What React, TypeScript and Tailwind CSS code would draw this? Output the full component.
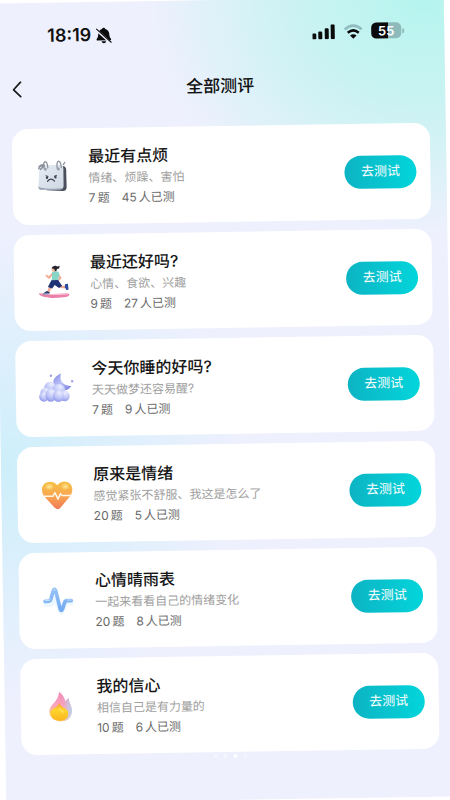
import type { ReactNode } from "react";

function CalendarIcon() {
  return (
    <svg viewBox="0 0 40 40" className="size-10" aria-hidden="true">
      <defs>
        <linearGradient id="paper" x1="0" y1="0" x2="1" y2="1">
          <stop offset="0" stopColor="#e6ebf2" />
          <stop offset="1" stopColor="#cdd7e3" />
        </linearGradient>
      </defs>
      <path d="M14 9.500h16q3.500 0 3.800 3.500l.2 17.500q0 4-4 4l-16-1z" fill="#4b4f5c" />
      <path d="M10 8.500h17.500q3.500 0 3.500 3.500v17q0 4-4 4H9q-3.500 0-3.200-3.500L7 11.500q.2-3 3-3z" fill="url(#paper)" />
      <path d="M5.800 29.500Q5.700 33 9 33h18q2 0 3-1.200-9 .8-17-.2-6-.8-7.200-2.100z" fill="#98a2b2" />
      <g fill="none" stroke="#8d939e" strokeWidth="1.300" strokeLinecap="round">
        <path d="M12 12q-1.500-6 .5-7 2.500-.5 3 6" />
        <path d="M25 12q-1-6 1-7.300 2.500-.5 3 6.300" />
        <path d="M7 9.500l5-1M8 12.500l4-3.500M6.500 11.500q1-4 5-3.500" strokeWidth="1.600" />
        <path d="M31 8l1.500-2" />
      </g>
      <circle cx="13" cy="12.500" r="1.500" fill="#9aa2ae" />
      <circle cx="26" cy="12.500" r="1.500" fill="#9aa2ae" />
      <g fill="none" stroke="#3f4553" strokeLinecap="round">
        <path d="M15 24.500q3.500-4 7 0" strokeWidth="1.200" />
        <path d="M13.500 19l2 .8M24 18.800l-2 .8" strokeWidth="1" />
      </g>
      <circle cx="14.500" cy="21" r="1.200" fill="#3f4553" />
      <circle cx="23" cy="20.600" r="1.200" fill="#3f4553" />
    </svg>
  );
}

function RunnerIcon() {
  return (
    <svg viewBox="0 0 40 40" className="size-10" aria-hidden="true">
      <path d="M5.300 30.200q4 1 13 1 9-.4 15-.2 2.200.3 1.700 1.800-1.500 1.700-6 2-6 .6-12 .4-10-.8-12-3.500-.4-1 .3-1.500z" fill="#ec7fa9" />
      <path d="M6 30.700q8 1.700 27.500.8" stroke="#f9bfd3" strokeWidth="1" fill="none" />
      <g fill="none" strokeLinecap="round" strokeLinejoin="round">
        <path d="M18 22l-2.500 4-2 4" stroke="#f2ab93" strokeWidth="2.600" />
        <path d="M24 22.500l3.500 2h3.500" stroke="#f2ab93" strokeWidth="2.400" />
        <path d="M18 11.500l-3 3.500-2.500-2" stroke="#f2ab93" strokeWidth="2" />
        <path d="M24 12l2.500 3.500-2.500 2" stroke="#f2ab93" strokeWidth="1.900" />
      </g>
      <path d="M18.200 9q3-1.200 6.500.3l.7 3.200-1.500 5.500h-6.300z" fill="#86d5c7" />
      <path d="M17.300 17.500h6.700l4 6-3.200 2-4.300-3.200-2.500 3.500-4.300-1.500z" fill="#1f3274" />
      <path d="M12.500 28.300l3 1.200-.8 2.300H8.500l.6-1.300z" fill="#2b3b75" />
      <path d="M9 31.200h6" stroke="#fff" strokeWidth=".8" />
      <path d="M30.800 21.800l3-.5.500 6-2.200.2-1.400-2.700z" fill="#2b4a9c" />
      <circle cx="20" cy="6.800" r="2.400" fill="#f5b9a2" />
      <path d="M17.600 5.500q1-2.900 4.400-2.400l1.600.8 2.200-.7-.6 2.800-2.100.4q0 2.200-2 2.200l-.8-2.300z" fill="#26262f" />
    </svg>
  );
}

function NightIcon() {
  return (
    <svg viewBox="0 0 40 40" className="size-10" aria-hidden="true">
      <defs>
        <radialGradient id="puff" cx=".6" cy=".2" r=".9">
          <stop offset="0" stopColor="#eceefe" />
          <stop offset=".55" stopColor="#bdc3f7" />
          <stop offset="1" stopColor="#8089e6" />
        </radialGradient>
        <linearGradient id="moon" x1="0" y1="0" x2="1" y2="1">
          <stop offset="0" stopColor="#8189e2" />
          <stop offset=".5" stopColor="#bcc2f8" />
          <stop offset="1" stopColor="#6f78d8" />
        </linearGradient>
      </defs>
      <path d="M25.500 5q-2 5.500 1.500 9.500 3.500 3.500 8.600 3-3.500 5.500-9.600 3.500-8-2.500-8.500-8.500 2-5.500 8-7.500z" fill="url(#moon)" />
      <circle cx="14.500" cy="19" r="6" fill="url(#puff)" />
      <circle cx="23" cy="22" r="6.500" fill="url(#puff)" />
      <circle cx="9.500" cy="24" r="5" fill="url(#puff)" />
      <circle cx="8" cy="28" r="4.800" fill="url(#puff)" />
      <circle cx="28.500" cy="27.500" r="5.300" fill="url(#puff)" />
      <ellipse cx="15" cy="26.500" rx="5.500" ry="6.500" fill="url(#puff)" />
      <ellipse cx="22.500" cy="27.500" rx="5.500" ry="5.800" fill="url(#puff)" />
      <circle cx="15.300" cy="7" r="1.200" fill="#9aa1df" />
      <circle cx="36.500" cy="12.800" r="1.200" fill="#9aa1df" />
    </svg>
  );
}

function HeartIcon() {
  return (
    <svg viewBox="0 0 40 40" className="size-10" aria-hidden="true">
      <defs>
        <linearGradient id="heart" x1="0" y1="0" x2="0" y2="1">
          <stop offset="0" stopColor="#f6bf45" />
          <stop offset=".5" stopColor="#f9a850" />
          <stop offset="1" stopColor="#f07a58" />
        </linearGradient>
        <radialGradient id="heartGlow">
          <stop offset="0" stopColor="#ffeb98" />
          <stop offset="1" stopColor="#ffeb98" stopOpacity="0" />
        </radialGradient>
      </defs>
      <path d="M20 34.500q-1.500 0-3-1.500L7.500 22.500Q4.500 19 4.500 15 5 7.500 12.500 7q4.500 0 7.500 3.500Q23 7 27.500 7q7 .5 7.500 8 0 4-3 7.500L23 33q-1.500 1.500-3 1.500z" fill="url(#heart)" />
      <ellipse cx="12" cy="12" rx="5" ry="3.500" fill="url(#heartGlow)" />
      <ellipse cx="28" cy="12" rx="4.500" ry="3.500" fill="url(#heartGlow)" />
      <path d="M7 21.500h8.500l2-3.500 3 6.500 2.500-5.500 1.500 2H34" fill="none" stroke="#fff6e8" strokeWidth="1.500" strokeLinecap="round" strokeLinejoin="round" />
    </svg>
  );
}

function PulseIcon() {
  return (
    <svg viewBox="0 0 40 40" className="size-10" aria-hidden="true">
      <defs>
        <linearGradient id="pulse" x1="0" y1="0" x2="0" y2="1">
          <stop offset="0" stopColor="#96c2f6" />
          <stop offset="1" stopColor="#72abf2" />
        </linearGradient>
      </defs>
      <g fill="none" strokeLinecap="round" strokeLinejoin="round">
        <path d="M7 23h5l4-8 6 16 4-9h6" stroke="#edf8fe" strokeWidth="6" />
        <path d="M6 20.500h3q2 0 2.700-2l2.600-8.500q1.200-2.500 2.400 0l4.300 18.500q1 2.800 2.200 0l2.300-6.500q.7-1.800 2.500-1.800h4" stroke="url(#pulse)" strokeWidth="3.700" />
        <path d="M6 19.800h3.500q1 0 1.500-1.500M15 9.500l1-.8M28 19.500h4" stroke="#c6e1ff" strokeWidth="1" />
      </g>
    </svg>
  );
}

function FlameIcon() {
  return (
    <svg viewBox="0 0 40 40" className="size-10" aria-hidden="true">
      <defs>
        <linearGradient id="flame" x1=".6" y1="0" x2=".4" y2="1">
          <stop offset="0" stopColor="#f58bb8" />
          <stop offset=".5" stopColor="#f8a5bd" />
          <stop offset="1" stopColor="#fbd27a" />
        </linearGradient>
        <linearGradient id="flameSide" x1="0" y1="0" x2="1" y2="0">
          <stop offset=".6" stopColor="#b9d4ee" stopOpacity="0" />
          <stop offset="1" stopColor="#b9d4ee" />
        </linearGradient>
        <linearGradient id="flameCore" x1="0" y1="0" x2="0" y2="1">
          <stop offset="0" stopColor="#fb9a3c" />
          <stop offset=".4" stopColor="#fdd52c" />
          <stop offset="1" stopColor="#fbb51e" />
        </linearGradient>
      </defs>
      <path d="M18.500 5q5 4 6 9.500 1.500-1 3.500-3 .2 3.500 2 7.500 1.300 3 1 6.500-1 9-11 9.500-10.500-.5-11.500-9.500 0-5 4-8.500 5.500-5.500 6-12z" fill="url(#flame)" />
      <path d="M18.500 5q5 4 6 9.500 1.500-1 3.500-3 .2 3.500 2 7.500 1.300 3 1 6.500-1 9-11 9.500-10.500-.5-11.500-9.500 0-5 4-8.500 5.500-5.500 6-12z" fill="url(#flameSide)" />
      <path d="M18.500 16q1.500 4 5.500 6 3.800 2 3.300 5.700-1 6-8.300 6.500-8-.5-9.500-6.500-.3-4.200 4-6.400 4-2 5-5.300z" fill="url(#flameCore)" />
      <path d="M19 22q1 2.500 3.500 3.500" stroke="#ffe978" strokeWidth="1.200" fill="none" strokeLinecap="round" />
    </svg>
  );
}

function MutedBell() {
  return (
    <svg viewBox="0 0 16 16" className="size-[17px]" aria-label="静音">
      <path d="M8 .8q1.300 0 1.500 1.200Q13.200 3.200 13.200 7q0 3 1.600 4.500.5 1.300-.8 1.300H2q-1.300 0-.8-1.300Q2.800 10 2.800 7q0-3.800 3.700-5Q6.700.8 8 .8zM5.800 13.600h4.400Q9.800 15.500 8 15.500t-2.200-1.900z" fill="#0b0b0b" />
      <path d="M.9 2.600l13.600 12.600" stroke="#eeeffe" strokeWidth="2.300" />
      <path d="M1.300 2l13.600 12.600" stroke="#0b0b0b" strokeWidth="1" strokeLinecap="round" />
    </svg>
  );
}

function StatusBar() {
  return (
    <div className="flex h-[66px] items-center justify-between pr-10 pl-[53px]">
      <div className="flex items-center gap-1">
        <span className="text-lg font-semibold">18:19</span>
        <MutedBell />
      </div>
      <div className="flex items-center gap-2">
        <svg viewBox="0 0 23 15" className="h-[15px] w-[23px]" fill="#0b0b0b" aria-label="信号">
          <rect x="0" y="9" width="4" height="6" rx="1.200" />
          <rect x="6" y="7" width="4" height="8" rx="1.200" />
          <rect x="12.500" y="4" width="4" height="11" rx="1.200" />
          <rect x="18.500" y="0" width="4" height="15" rx="1.200" />
        </svg>
        <svg viewBox="0 0 20 15" className="h-[15px] w-5" fill="none" aria-label="无线网络">
          <path d="M1.500 5.500q8.500-7.500 17 0" stroke="#90bcc0" strokeWidth="2.600" />
          <path d="M4.500 8.800q5.500-4.600 11 0" stroke="#0b0b0b" strokeWidth="2.600" />
          <path d="M10 14.800l-3.200-3.300q3.200-2.500 6.400 0z" fill="#0b0b0b" />
        </svg>
        <div className="flex items-center gap-px">
          <div className="flex h-4 w-[30px] items-center justify-center rounded-[5px] bg-linear-to-r from-[#0b0b0b] from-55% to-[#8fbabc] to-55% text-[13px] leading-4 font-semibold text-white">
            55
          </div>
          <div className="h-[5px] w-0.5 rounded-r-full bg-[#8fbabc]" />
        </div>
      </div>
    </div>
  );
}

type Quiz = {
  title: string;
  desc: string;
  questions: number;
  taken: number;
  icon: ReactNode;
};

const QUIZZES: Quiz[] = [
  { title: "最近有点烦", desc: "情绪、烦躁、害怕", questions: 7, taken: 45, icon: <CalendarIcon /> },
  { title: "最近还好吗?", desc: "心情、食欲、兴趣", questions: 9, taken: 27, icon: <RunnerIcon /> },
  { title: "今天你睡的好吗?", desc: "天天做梦还容易醒?", questions: 7, taken: 9, icon: <NightIcon /> },
  { title: "原来是情绪", desc: "感觉紧张不舒服、我这是怎么了", questions: 20, taken: 5, icon: <HeartIcon /> },
  { title: "心情晴雨表", desc: "一起来看看自己的情绪变化", questions: 20, taken: 8, icon: <PulseIcon /> },
  { title: "我的信心", desc: "相信自己是有力量的", questions: 10, taken: 6, icon: <FlameIcon /> },
];

function QuizCard({ title, desc, questions, taken, icon }: Quiz) {
  return (
    <li className="flex h-24 items-center gap-4 rounded-2xl bg-white pr-[14px] pl-5">
      <div className="shrink-0">{icon}</div>
      <div className="min-w-0 flex-1">
        <h2 className="text-base leading-6 font-medium text-[#161616]">{title}</h2>
        <p className="text-xs leading-5 text-[#a0a0a0]">{desc}</p>
        <p className="flex gap-3 text-xs leading-5 text-[#6a6a6a]">
          <span className="flex gap-0.5">
            <span>{questions}</span>
            <span>题</span>
          </span>
          <span className="flex gap-0.5">
            <span>{taken}</span>
            <span>人已测</span>
          </span>
        </p>
      </div>
      <button
        type="button"
        className="h-[33px] w-[72px] shrink-0 rounded-full bg-linear-to-r from-[#0cb4c3] to-[#02d5db] text-[13px] text-white"
      >
        去测试
      </button>
    </li>
  );
}

export default function App() {
  return (
    <div className="min-h-screen overflow-hidden bg-white font-['Inter','Noto_Sans_CJK_SC',sans-serif] text-[#111]">
      <div className="min-h-screen -rotate-[0.9deg] bg-[#eff0fe] bg-[radial-gradient(ellipse_62%_30%_at_96%_0%,#b5f4ee_0%,#c8f3f3_40%,#d6f2f6_65%,#d6f2f600_100%),radial-gradient(ellipse_55%_30%_at_0%_58%,#cdeffa_0%,#d6f1fb00_100%)]">
        <StatusBar />
        <header className="grid h-[42px] grid-cols-[1fr_auto_1fr] items-center px-4">
          <button type="button" aria-label="返回" className="flex h-8 w-8 items-center">
            <svg viewBox="0 0 12 18" className="h-[18px] w-3" fill="none">
              <path d="M9.500 1L2.500 8.500 9.500 15.500" stroke="#1a1a1a" strokeWidth="1.700" strokeLinecap="round" strokeLinejoin="round" />
            </svg>
          </button>
          <h1 className="text-[17px] font-medium">全部测评</h1>
        </header>
        <main className="px-4 pt-[18px]">
          <ul className="flex flex-col gap-2.5">
            {QUIZZES.map((quiz) => (
              <QuizCard key={quiz.title} {...quiz} />
            ))}
          </ul>
          <div className="flex justify-center gap-1.5 pt-0.5">
            <span className="size-1 rounded-full bg-white/40" />
            <span className="size-1 rounded-full bg-white/40" />
            <span className="size-1 rounded-full bg-white" />
            <span className="size-1 rounded-full bg-white/40" />
          </div>
        </main>
      </div>
    </div>
  );
}
